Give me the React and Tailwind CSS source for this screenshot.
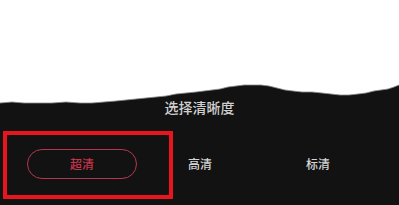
import React from 'react';

const cjk = { fontFamily: '"Noto Sans CJK SC", "Noto Sans", sans-serif' };

// torn paper edge, measured from the top of the dark panel at 80px
const curve =
  'M399 5 L394 7 L388 9 L381 10 L374 11 L366 13 L358 14 L349 15 L340 15 L331 14 L322 13 L312 12 L302 12 L293 11 L285 10 L277 8 L269 6 L261 5 L252 5 L244 5 L236 6 L228 7 L220 9 L212 10 L204 11 L196 12 L186 13 L176 14 L166 16 L156 17 L146 18 L136 19 L126 20 L116 21 L104 22 L92 23 L80 23 L66 22 L52 23 L38 23 L24 23 L12 22 L0 23';

export default function App() {
  const options = ['超清', '高清', '标清'];

  return (
    <div className="w-[399px] h-[205px] bg-white flex flex-col overflow-hidden" style={cjk}>
      <div className="h-[80px] shrink-0" />
      <div className="relative flex-1 bg-[#121212]">
        <svg className="absolute left-0 top-[-1px] w-[399px] h-[27px]" viewBox="0 -1 399 27" preserveAspectRatio="none">
          <path d={`M0 -1 L399 -1 L${curve.slice(1)} Z`} fill="#ffffff" />
          <path d={curve} fill="none" stroke="#8a8a8a" strokeWidth="0.8" />
        </svg>

        <div className="relative pt-[19px] text-center text-[14px] leading-[16px] font-medium text-[#d0d0d0]">选择清晰度</div>

        <div className="grid grid-cols-[118px_118px_118px] pl-[23px] mt-[34px]">
          {options.map((label, i) => (
            <div key={label} className="flex justify-center">
              {i === 0 ? (
                <div className="w-[110px] h-[30px] rounded-full border-[1.5px] border-[#b8364d] flex items-center justify-center text-[12px] font-medium text-[#c8334c]">
                  {label}
                </div>
              ) : (
                <div className="h-[30px] flex items-center text-[12px] font-medium text-[#d6d6d6]">{label}</div>
              )}
            </div>
          ))}
        </div>

        {/* red highlight annotation */}
        <div className="absolute left-[3px] top-[51px] w-[170px] h-[68px] border-[4px] border-[#e8161c]" />
      </div>
    </div>
  );
}
